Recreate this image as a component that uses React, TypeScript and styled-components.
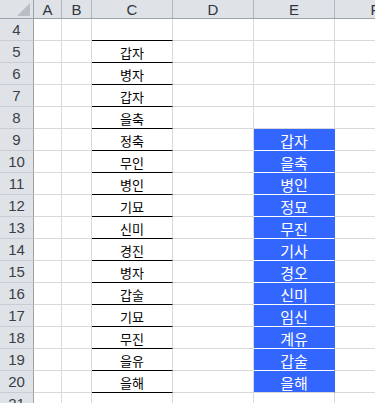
import React from "react";
import styled, { createGlobalStyle } from "styled-components";

const Global = createGlobalStyle`
  html, body {
    margin: 0;
    padding: 0;
    background: #ffffff;
    overflow: hidden;
  }
`;

const COLS = "34px 28px 30px 81px 81px 81px 81px";

const Sheet = styled.div`
  width: 375px;
  height: 403px;
  overflow: hidden;
  display: flex;
  flex-direction: column;
  background: #ffffff;
`;

const HeaderRow = styled.div`
  display: grid;
  grid-template-columns: ${COLS};
  height: 19px;
  flex: none;
  background: #dfe3e8;
  border-bottom: 1px solid #9da2a9;
  box-sizing: border-box;
`;

const Corner = styled.div`
  position: relative;
  border-right: 1px solid #9da2a9;
  box-sizing: border-box;
`;

const CornerTriangle = styled.div`
  position: absolute;
  right: 3px;
  bottom: 2px;
  width: 0;
  height: 0;
  border-left: 13px solid transparent;
  border-bottom: 13px solid #b9bec5;
`;

const ColHead = styled.div`
  display: flex;
  align-items: center;
  justify-content: center;
  border-right: 1px solid #b3b8bf;
  box-sizing: border-box;
  font-family: "Liberation Sans", Arial, sans-serif;
  font-size: 15px;
  color: #2f3640;
  line-height: 1;
  padding-top: 1px;
`;

const Row = styled.div`
  display: grid;
  grid-template-columns: ${COLS};
  height: 22px;
  flex: none;
`;

const RowHead = styled.div`
  display: flex;
  align-items: center;
  justify-content: center;
  background: #dfe3e8;
  border-right: 1px solid #9da2a9;
  border-bottom: 1px solid #c9cdd3;
  box-sizing: border-box;
  font-family: "Liberation Sans", Arial, sans-serif;
  font-size: 15px;
  color: #3a3f47;
  line-height: 1;
`;

type CellProps = { $ruled?: boolean; $fill?: boolean; $sep?: boolean };

const Cell = styled.div<CellProps>`
  display: flex;
  align-items: center;
  justify-content: center;
  box-sizing: border-box;
  border-right: 1px solid ${(p) => (p.$fill ? "#3366ff" : "#d9d9d9")};
  border-bottom: 1px solid
    ${(p) => (p.$ruled ? "#000000" : p.$sep ? "#ffffff" : "#d9d9d9")};
  background: ${(p) => (p.$fill ? "#3366ff" : "#ffffff")};
  color: ${(p) => (p.$fill ? "#ffffff" : "#000000")};
  font-family: "Noto Sans CJK KR", "Noto Sans", sans-serif;
  font-size: ${(p) => (p.$fill ? "15px" : "13px")};
  line-height: 1;
  padding-top: 1px;
  white-space: nowrap;
  overflow: hidden;
`;

const columnC: Record<number, string> = {
  5: "갑자",
  6: "병자",
  7: "갑자",
  8: "을축",
  9: "정축",
  10: "무인",
  11: "병인",
  12: "기묘",
  13: "신미",
  14: "경진",
  15: "병자",
  16: "갑술",
  17: "기묘",
  18: "무진",
  19: "을유",
  20: "을해",
};

const columnE: Record<number, string> = {
  9: "갑자",
  10: "을축",
  11: "병인",
  12: "정묘",
  13: "무진",
  14: "기사",
  15: "경오",
  16: "신미",
  17: "임신",
  18: "계유",
  19: "갑술",
  20: "을해",
};

const rows = Array.from({ length: 18 }, (_, i) => i + 4);

export default function App() {
  return (
    <>
      <Global />
      <Sheet>
        <HeaderRow>
          <Corner>
            <CornerTriangle />
          </Corner>
          {["A", "B", "C", "D", "E", "F"].map((c) => (
            <ColHead key={c}>{c}</ColHead>
          ))}
        </HeaderRow>
        {rows.map((r) => {
          const inC = r >= 4 && r <= 20;
          const inE = r >= 9 && r <= 20;
          return (
            <Row key={r}>
              <RowHead>{r}</RowHead>
              <Cell />
              <Cell />
              <Cell $ruled={inC}>{columnC[r] ?? ""}</Cell>
              <Cell />
              <Cell $fill={inE} $sep={inE && r < 20}>
                {columnE[r] ?? ""}
              </Cell>
              <Cell />
            </Row>
          );
        })}
      </Sheet>
    </>
  );
}
